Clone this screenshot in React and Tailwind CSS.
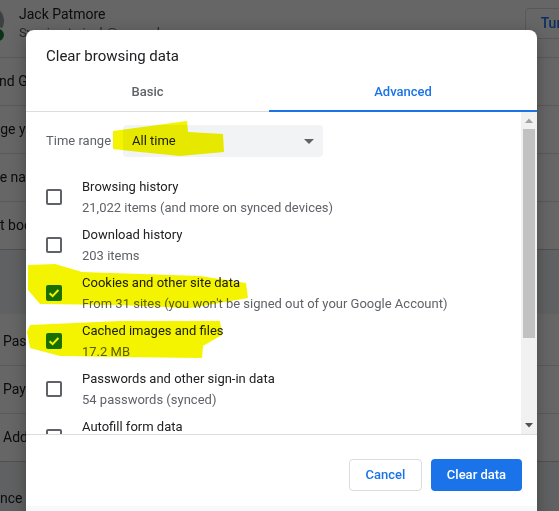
import React from "react";

const items = [
  { title: "Browsing history", sub: "21,022 items (and more on synced devices)", checked: false },
  { title: "Download history", sub: "203 items", checked: false },
  { title: "Cookies and other site data", sub: "From 31 sites (you won't be signed out of your Google Account)", checked: true },
  { title: "Cached images and files", sub: "17.2 MB", checked: true },
  { title: "Passwords and other sign-in data", sub: "54 passwords (synced)", checked: false },
  { title: "Autofill form data", sub: "", checked: false },
];

function Checkbox({ checked }) {
  if (checked) {
    return (
      <div className="w-[16px] h-[16px] rounded-[2px] bg-[#1a73e8] shrink-0">
        <svg width="16" height="16" viewBox="0 0 16 16">
          <path d="M3.6 8.2 L6.6 11.1 L12.4 5" fill="none" stroke="#fff" strokeWidth="2" />
        </svg>
      </div>
    );
  }
  return <div className="w-[16px] h-[16px] rounded-[2px] border-2 border-[#5f6368] shrink-0" />;
}

function BackgroundPage() {
  const row = "h-[48px] flex items-center border-t border-[#e0e0e0] text-[14px] text-[#202124] whitespace-nowrap";
  return (
    <div className="flex flex-col">
      <div className="bg-white">
        <div className="h-[57px] flex items-start relative">
          <div className="absolute left-[-26px] top-[6px] w-[30px] h-[30px] rounded-full bg-[#9aa0a6]" />
          <div className="absolute left-[-10px] top-[27px] w-[16px] h-[16px] rounded-full bg-[#188038] border-2 border-white" />
          <div className="pl-[19px] pt-[4px]">
            <div className="text-[14px] leading-[20px] text-[#202124]">Jack Patmore</div>
            <div className="text-[13px] leading-[18px] text-[#5f6368]">Syncing to jack@example.com</div>
          </div>
          <div className="ml-auto mt-[8px] mr-[-78px] h-[31px] px-[15px] flex items-center border border-[#dadce0] rounded-[4px] text-[14px] font-medium text-[#1a73e8] whitespace-nowrap">
            Turn on sync
          </div>
        </div>
        <div className={row}><span className="ml-[-42px]">Sync and Google services</span></div>
        <div className={row}><span className="ml-[-35px]">Manage your Google Account</span></div>
        <div className={row}><span className="ml-[-42px]">Chrome name and picture</span></div>
        <div className={row}><span className="ml-[-37px]">Import bookmarks and settings</span></div>
      </div>
      <div className="h-[65px] border-t border-[#c8c8c8]" />
      <div className="bg-white">
        <div className="h-[51px] flex items-center pt-[3px] text-[14px] text-[#202124]"><span className="ml-[3px]">Passwords</span></div>
        <div className={row}><span className="ml-[3px]">Payment methods</span></div>
        <div className={row}><span className="ml-[3px]">Addresses and more</span></div>
      </div>
      <div className="h-[49px] border-t border-[#c8c8c8] flex items-end pb-[1px] text-[14px] text-[#202124] whitespace-nowrap">
        <span className="ml-[-52px]">Appearance</span>
      </div>
    </div>
  );
}

function Scrollbar() {
  return (
    <div className="w-[16px] bg-[#f1f1f1] flex flex-col shrink-0">
      <div className="h-[17px] flex items-center justify-center">
        <svg width="8" height="5" viewBox="0 0 8 5"><path d="M0 5 L4 0.5 L8 5 Z" fill="#a3a3a3" /></svg>
      </div>
      <div className="h-[209px] mx-[2px] bg-[#c1c1c1]" />
      <div className="flex-1" />
      <div className="h-[17px] flex items-center justify-center">
        <svg width="8" height="5" viewBox="0 0 8 5"><path d="M0 0 L8 0 L4 4.5 Z" fill="#505050" /></svg>
      </div>
    </div>
  );
}

function Dialog() {
  return (
    <div className="absolute left-[26px] top-[30px] w-[511px] bg-white rounded-t-[8px] shadow-[0_4px_16px_rgba(0,0,0,0.3)] flex flex-col">
      <div className="px-[20px] pt-[16px] pb-[5px] text-[15px] leading-[20px] text-[#202124]">
        Clear browsing data
      </div>
      <div className="flex h-[41px] pt-[1px] border-b border-[#dadce0] text-[13px] font-medium">
        <div className="w-[243px] flex items-center justify-center text-[#5f6368]">Basic</div>
        <div className="flex-1 flex items-center justify-center text-[#1a73e8] relative">
          Advanced
          <div className="absolute left-0 right-0 bottom-[-1px] h-[2px] bg-[#1a73e8]" />
        </div>
      </div>
      <div className="h-[323px] flex border-b border-[#dadce0]">
        <div className="flex-1 overflow-hidden">
          <div className="flex items-center px-[20px] mt-[13px] mb-[16px]">
            <div className="w-[77px] text-[13px] text-[#5f6368]">Time range</div>
            <div className="w-[200px] h-[32px] bg-[#f1f3f4] rounded-[4px] flex items-center pl-[9px] pr-[9px] text-[13px] text-[#202124]">
              <span className="flex-1">All time</span>
              <svg width="10" height="5" viewBox="0 0 10 5"><path d="M0 0 L10 0 L5 5 Z" fill="#5f6368" /></svg>
            </div>
          </div>
          {items.map((it) => (
            <div key={it.title} className="h-[48px] flex items-center pl-[20px] gap-[20px] shrink-0">
              <Checkbox checked={it.checked} />
              <div className="text-[13px] leading-[21px]">
                <div className="text-[#202124]">{it.title}</div>
                <div className="text-[#5f6368]">{it.sub || "\u00a0"}</div>
              </div>
            </div>
          ))}
        </div>
        <Scrollbar />
      </div>
      <div className="flex justify-end gap-[9px] pt-[24px] pb-[15px] pr-[15px]">
        <button className="w-[73px] h-[32px] rounded-[4px] border border-[#dadce0] bg-white text-[13px] font-medium text-[#1a73e8]">
          Cancel
        </button>
        <button className="w-[91px] h-[32px] rounded-[4px] bg-[#1a73e8] text-[13px] font-medium text-white">
          Clear data
        </button>
      </div>
      <div className="h-[20px] bg-[#f8f9fa]" />
    </div>
  );
}

function Highlights() {
  return (
    <svg className="absolute inset-0 pointer-events-none mix-blend-multiply" width="559" height="511" viewBox="0 0 559 511">
      <g fill="#f4f400">
        <polygon points="113,131 150,126 187,121 188,132 223,134 224,152 180,156 140,152 113,149" />
        <polygon points="28,265 55,264 82,272 200,276 246,283 248,298 190,308 120,305 40,304 28,290" />
        <polygon points="30,325 120,321 220,321 222,335 203,346 202,358 120,357 60,356 30,348 27,332" />
      </g>
    </svg>
  );
}

export default function App() {
  return (
    <div
      className="relative w-[559px] h-[511px] overflow-hidden bg-[#f1f3f4]"
      style={{ fontFamily: "Roboto, 'Noto Sans', Arial, sans-serif" }}
    >
      <BackgroundPage />
      <div className="absolute inset-0 bg-black/60" />
      <Dialog />
      <Highlights />
    </div>
  );
}
